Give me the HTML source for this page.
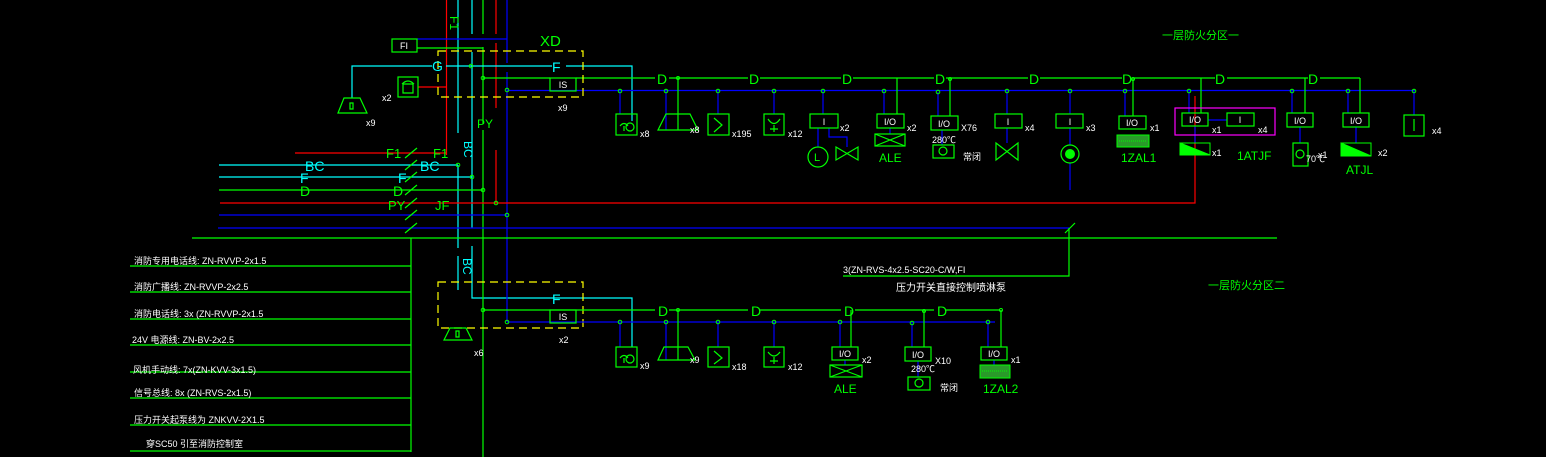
<!DOCTYPE html>
<html><head><meta charset="utf-8"><style>
html,body{margin:0;padding:0;background:#000;}
svg{display:block}
text{font-family:"Liberation Sans","Noto Sans CJK SC",sans-serif;}
.w{fill:#fff;font-size:9px}
.g{fill:#00ff00}
.c{fill:#00ffff}
</style></head><body>
<svg width="1546" height="457" viewBox="0 0 1546 457" xmlns="http://www.w3.org/2000/svg">
<rect width="1546" height="457" fill="#000"/>
<g fill="none" stroke-width="1.2">
<path d="M446.5 0V155" stroke="#ff0000"/>
<path d="M496 0V34M496 43V108M496 150V203" stroke="#ff0000"/>
<path d="M458 0V133M458 165V248M458 256V290" stroke="#00ffff"/>
<path d="M472 0V34M472 52V228M472 246V298H632V347" stroke="#00ffff"/>
<path d="M483 0V34M483 47V124M483 130V457" stroke="#00ff00"/>
<path d="M507 0V63M507 72V322" stroke="#0000ff"/>
<path d="M295 153H446" stroke="#ff0000"/>
<path d="M219 165H458" stroke="#00ffff"/>
<path d="M219 177H472" stroke="#00ffff"/>
<path d="M219 190H483" stroke="#00ff00"/>
<path d="M220 203H1195V96" stroke="#ff0000"/>
<path d="M219 215H507" stroke="#0000ff"/>
<path d="M218 228H1070" stroke="#0000ff"/>
<path d="M192 238H1277" stroke="#00ff00"/>
<path d="M411 238V452M130 266H411M130 292H411M130 319H411M130 345H411M130 372H411M130 398H411M130 425H411M130 451H411" stroke="#00ff00"/>
<path d="M405 158L417 148M405 170L417 160M405 182L417 172M405 195L417 185M405 208L417 198M405 220L417 210M405 233L417 223M1065 233L1075 223" stroke="#00ff00"/>
<path d="M417 39H507" stroke="#0000ff"/>
<path d="M417 48H483" stroke="#00ff00"/>
<path d="M352 98V66H432M446 66H552M566 66H632V121" stroke="#00ffff"/>
<path d="M418 87H446" stroke="#ff0000"/>
<path d="M483 78H550M576 78H655M669 78H748M760 78H841M853 78H934M946 78H1028M1040 78H1122M1134 78H1215M1227 78H1308M1320 78H1360" stroke="#00ff00"/>
<path d="M507 90.5H1415" stroke="#0000ff"/>
<path d="M438 51H583V97H438Z" stroke="#ffff00" stroke-dasharray="8,5"/>
<path d="M438 282H583V328H438Z" stroke="#ffff00" stroke-dasharray="8,5"/>
<path d="M483 310H655M669 310H748M760 310H841M855 310H934M946 310H1000" stroke="#00ff00"/>
<path d="M507 322H995" stroke="#0000ff"/>
<path d="M843 276H1069V228" stroke="#00ff00"/>
<path d="M620 91V114M666 91V130M718 91V114M774 91V114M823 91V114M884 91V114M938 92V116M1007 91V114M1070 91V114M1070 128V145M1070 163V190M1125 91V116M1189 91V113M1292 91V113M1348 91V113M1414 91V115" stroke="#0000ff"/>
<path d="M818 128V147M829 128V137H847V147M890 128V134M942 130V145M1007 128V143M1195 126V143M1300 127V143M1356 127V143M1208 120H1227" stroke="#0000ff"/>
<path d="M678 78V130M897 78V114M950 78V116M1133 78V116M1201 78V113M1305 78V113M1360 78V113" stroke="#00ff00"/>
<path d="M620 322V347M666 322V360M718 322V347M774 322V347M840 322V347M912 322V347M988 322V347" stroke="#0000ff"/>
<path d="M678 310V360M851 310V347M924 310V347M1001 310V347" stroke="#00ff00"/>
<path d="M845 360V365M918 361V377M994 360V365" stroke="#0000ff"/>
<g stroke="#00ff00">
<rect x="392" y="39" width="25" height="13"/>
<rect x="398" y="77" width="20" height="20"/>
<path d="M402 84Q408 78 414 84M403 84H413V93H403Z"/>
<rect x="550" y="78" width="26" height="13"/>
<rect x="550" y="310" width="26" height="13"/>
<path d="M338 113L344 98H360L367 113Z"/><path d="M350 103V109H353V103Z"/>
<path d="M444 340L450 328H466L472 340Z"/><path d="M456 331V337H459V331Z"/>
<rect x="616" y="114" width="21" height="21"/><rect x="616" y="347" width="21" height="20"/>
<path d="M658 130L666 114H690L698 130Z"/><path d="M658 360L664 347H688L695 360Z"/>
<rect x="708" y="114" width="21" height="21"/><path d="M714 118L722 125L714 132"/>
<rect x="708" y="347" width="21" height="20"/><path d="M714 351L722 358L714 364"/>
<rect x="764" y="114" width="20" height="21"/><path d="M768 119Q774 128 780 119M774 125V132M770 129H778"/>
<rect x="764" y="347" width="20" height="20"/><path d="M768 352Q774 360 780 352M774 357V364M770 361H778"/>
<path d="M620 126Q624 121 628 126M624 126V131"/><circle cx="630" cy="127" r="4"/>
<path d="M620 358Q624 353 628 358M624 358V363"/><circle cx="630" cy="359" r="4"/>
<rect x="810" y="114" width="28" height="14"/>
<circle cx="818" cy="157" r="10"/>
<path d="M836 147L858 160V147L836 160Z"/>
<rect x="877" y="114" width="27" height="14"/>
<rect x="875" y="134" width="30" height="12"/><path d="M875 134L905 146M905 134L875 146"/>
<rect x="931" y="116" width="27" height="14"/>
<rect x="933" y="145" width="21" height="13"/><circle cx="943" cy="151" r="4"/>
<rect x="995" y="114" width="27" height="14"/>
<path d="M996 143L1018 160V143L996 160Z"/>
<rect x="1056" y="114" width="27" height="14"/>
<circle cx="1070" cy="154" r="9"/>
<rect x="1119" y="116" width="27" height="13"/>
<rect x="1182" y="113" width="26" height="13"/>
<rect x="1227" y="113" width="27" height="13"/>
<rect x="1287" y="113" width="26" height="14"/>
<rect x="1293" y="143" width="15" height="23"/><circle cx="1300" cy="154" r="4"/>
<rect x="1343" y="113" width="26" height="14"/>
<rect x="1404" y="115" width="20" height="21"/><path d="M1414 119V131"/>
<rect x="832" y="347" width="26" height="13"/>
<rect x="830" y="365" width="32" height="12"/><path d="M830 365L862 377M862 365L830 377"/>
<rect x="905" y="347" width="26" height="14"/>
<rect x="908" y="377" width="22" height="13"/><circle cx="919" cy="383" r="4"/>
<rect x="981" y="347" width="26" height="13"/>
</g>
<rect x="1175" y="108" width="100" height="27" stroke="#ff00ff"/>
</g>
<rect x="1117" y="135" width="32" height="12" fill="#2a9a2a" stroke="#00ff00"/>
<path d="M1119 141H1147" stroke="#00ff00" stroke-dasharray="1,1"/>
<rect x="980" y="365" width="30" height="13" fill="#2a9a2a" stroke="#00ff00"/>
<path d="M982 371H1008" stroke="#00ff00" stroke-dasharray="1,1"/>
<path d="M1180 143L1210 155H1180Z" fill="#00ff00" stroke="#00ff00"/><rect x="1180" y="143" width="30" height="12" fill="none" stroke="#00ff00"/>
<path d="M1341 143L1371 156H1341Z" fill="#00ff00" stroke="#00ff00"/><rect x="1341" y="143" width="30" height="13" fill="none" stroke="#00ff00"/>
<circle cx="1070" cy="154" r="5" fill="#00ff00"/>
<g fill="none" stroke="#00ff00" stroke-width="1">
<circle cx="620" cy="91" r="1.8"/><circle cx="666" cy="91" r="1.8"/><circle cx="718" cy="91" r="1.8"/><circle cx="774" cy="91" r="1.8"/><circle cx="823" cy="91" r="1.8"/><circle cx="884" cy="91" r="1.8"/><circle cx="938" cy="92" r="1.8"/><circle cx="1007" cy="91" r="1.8"/><circle cx="1070" cy="91" r="1.8"/><circle cx="1125" cy="91" r="1.8"/><circle cx="1189" cy="91" r="1.8"/><circle cx="1292" cy="91" r="1.8"/><circle cx="1348" cy="91" r="1.8"/><circle cx="1414" cy="91" r="1.8"/>
<circle cx="620" cy="322" r="1.8"/><circle cx="666" cy="322" r="1.8"/><circle cx="718" cy="322" r="1.8"/><circle cx="774" cy="322" r="1.8"/><circle cx="840" cy="322" r="1.8"/><circle cx="912" cy="323" r="1.8"/><circle cx="988" cy="322" r="1.8"/>
<circle cx="678" cy="78" r="1.5"/><circle cx="950" cy="79" r="1.5"/><circle cx="1133" cy="79" r="1.5"/><circle cx="924" cy="311" r="1.5"/><circle cx="1001" cy="310" r="1.5"/><circle cx="678" cy="310" r="1.5"/>
<circle cx="483" cy="78" r="1.8"/><circle cx="507" cy="90" r="1.8"/><circle cx="458" cy="165" r="1.8"/><circle cx="472" cy="177" r="1.8"/><circle cx="483" cy="190" r="1.8"/><circle cx="496" cy="203" r="1.8"/><circle cx="507" cy="215" r="1.8"/><circle cx="471" cy="66" r="1.8"/><circle cx="507" cy="322" r="1.8"/><circle cx="483" cy="310" r="1.8"/>
</g>
<g class="g" font-size="14">
<text x="657" y="84">D</text><text x="749" y="84">D</text><text x="842" y="84">D</text><text x="935" y="84">D</text><text x="1029" y="84">D</text><text x="1122" y="84">D</text><text x="1215" y="84">D</text><text x="1308" y="84">D</text>
<text x="658" y="316">D</text><text x="751" y="316">D</text><text x="844" y="316">D</text><text x="937" y="316">D</text>
<text x="540" y="46" font-size="15">XD</text>
<text x="386" y="158" font-size="13">F1</text><text x="433" y="158" font-size="13">F1</text>
<text x="300" y="196" font-size="14">D</text><text x="393" y="196" font-size="14">D</text>
<text x="388" y="210" font-size="13">PY</text><text x="435" y="210" font-size="13">JF</text>
<text x="477" y="128" font-size="12">PY</text>
<text x="814" y="161" font-size="11">L</text>
</g>
<g class="c" font-size="14">
<text x="432" y="71">G</text><text x="552" y="72">F</text><text x="552" y="304">F</text>
<text x="305" y="171">BC</text><text x="420" y="171">BC</text>
<text x="300" y="183">F</text><text x="398" y="183">F</text>
</g>
<text x="451" y="142" class="c" font-size="12" transform="rotate(90 458 148)">BC</text>
<text x="451" y="260" class="c" font-size="12" transform="rotate(90 458 265)">BC</text>
<text x="440" y="18" class="g" font-size="12" transform="rotate(90 446 22)">F1</text>
<g class="w" font-size="9" text-anchor="middle">
<text x="404" y="49">FI</text><text x="563" y="88">IS</text><text x="563" y="320">IS</text>
<text x="824" y="125">I</text><text x="890" y="125">I/O</text><text x="944" y="127">I/O</text><text x="1008" y="125">I</text><text x="1070" y="125">I</text>
<text x="1132" y="126">I/O</text><text x="1195" y="123">I/O</text><text x="1240" y="123">I</text><text x="1300" y="124">I/O</text><text x="1356" y="124">I/O</text>
<text x="845" y="357">I/O</text><text x="918" y="358">I/O</text><text x="994" y="357">I/O</text>
</g>
<g class="w" font-size="8">
<text x="640" y="137">x8</text><text x="690" y="133">x8</text><text x="732" y="137">x195</text><text x="788" y="137">x12</text><text x="840" y="131">x2</text><text x="907" y="131">x2</text><text x="961" y="131">X76</text><text x="1025" y="131">x4</text><text x="1086" y="131">x3</text><text x="1150" y="131">x1</text><text x="1212" y="133">x1</text><text x="1258" y="133">x4</text><text x="1212" y="156">x1</text><text x="1318" y="158">x1</text><text x="1378" y="156">x2</text><text x="1432" y="134">x4</text>
<text x="382" y="101">x2</text><text x="366" y="126">x9</text><text x="558" y="111">x9</text>
<text x="474" y="356">x6</text><text x="559" y="343">x2</text>
<text x="640" y="369">x9</text><text x="690" y="363">x9</text><text x="732" y="370">x18</text><text x="788" y="370">x12</text><text x="862" y="363">x2</text><text x="935" y="364">X10</text><text x="1011" y="363">x1</text>
<text x="963" y="160">常闭</text><text x="940" y="391">常闭</text>
</g>
<g class="w" font-size="11">
<text x="932" y="143">280℃</text><text x="1306" y="162">70℃</text><text x="911" y="372">280℃</text>
</g>
<g class="g" font-size="12">
<text x="879" y="162">ALE</text><text x="1121" y="162">1ZAL1</text><text x="1237" y="160">1ATJF</text><text x="1346" y="174">ATJL</text>
<text x="834" y="393">ALE</text><text x="983" y="393">1ZAL2</text>
<text x="1162" y="39" font-size="11">一层防火分区一</text>
<text x="1208" y="289" font-size="11">一层防火分区二</text>
</g>
<g class="w" font-size="9">
<text x="843" y="273">3(ZN-RVS-4x2.5-SC20-C/W,FI</text>
<text x="896" y="291" font-size="10">压力开关直接控制喷淋泵</text>
<text x="134" y="264">消防专用电话线: ZN-RVVP-2x1.5</text>
<text x="134" y="290">消防广播线: ZN-RVVP-2x2.5</text>
<text x="134" y="317">消防电话线: 3x (ZN-RVVP-2x1.5</text>
<text x="132" y="343">24V 电源线: ZN-BV-2x2.5</text>
<text x="133" y="373">风机手动线: 7x(ZN-KVV-3x1.5)</text>
<text x="134" y="396">信号总线: 8x (ZN-RVS-2x1.5)</text>
<text x="134" y="423">压力开关起泵线为 ZNKVV-2X1.5</text>
<text x="146" y="447">穿SC50 引至消防控制室</text>
</g>
</svg>
</body></html>
